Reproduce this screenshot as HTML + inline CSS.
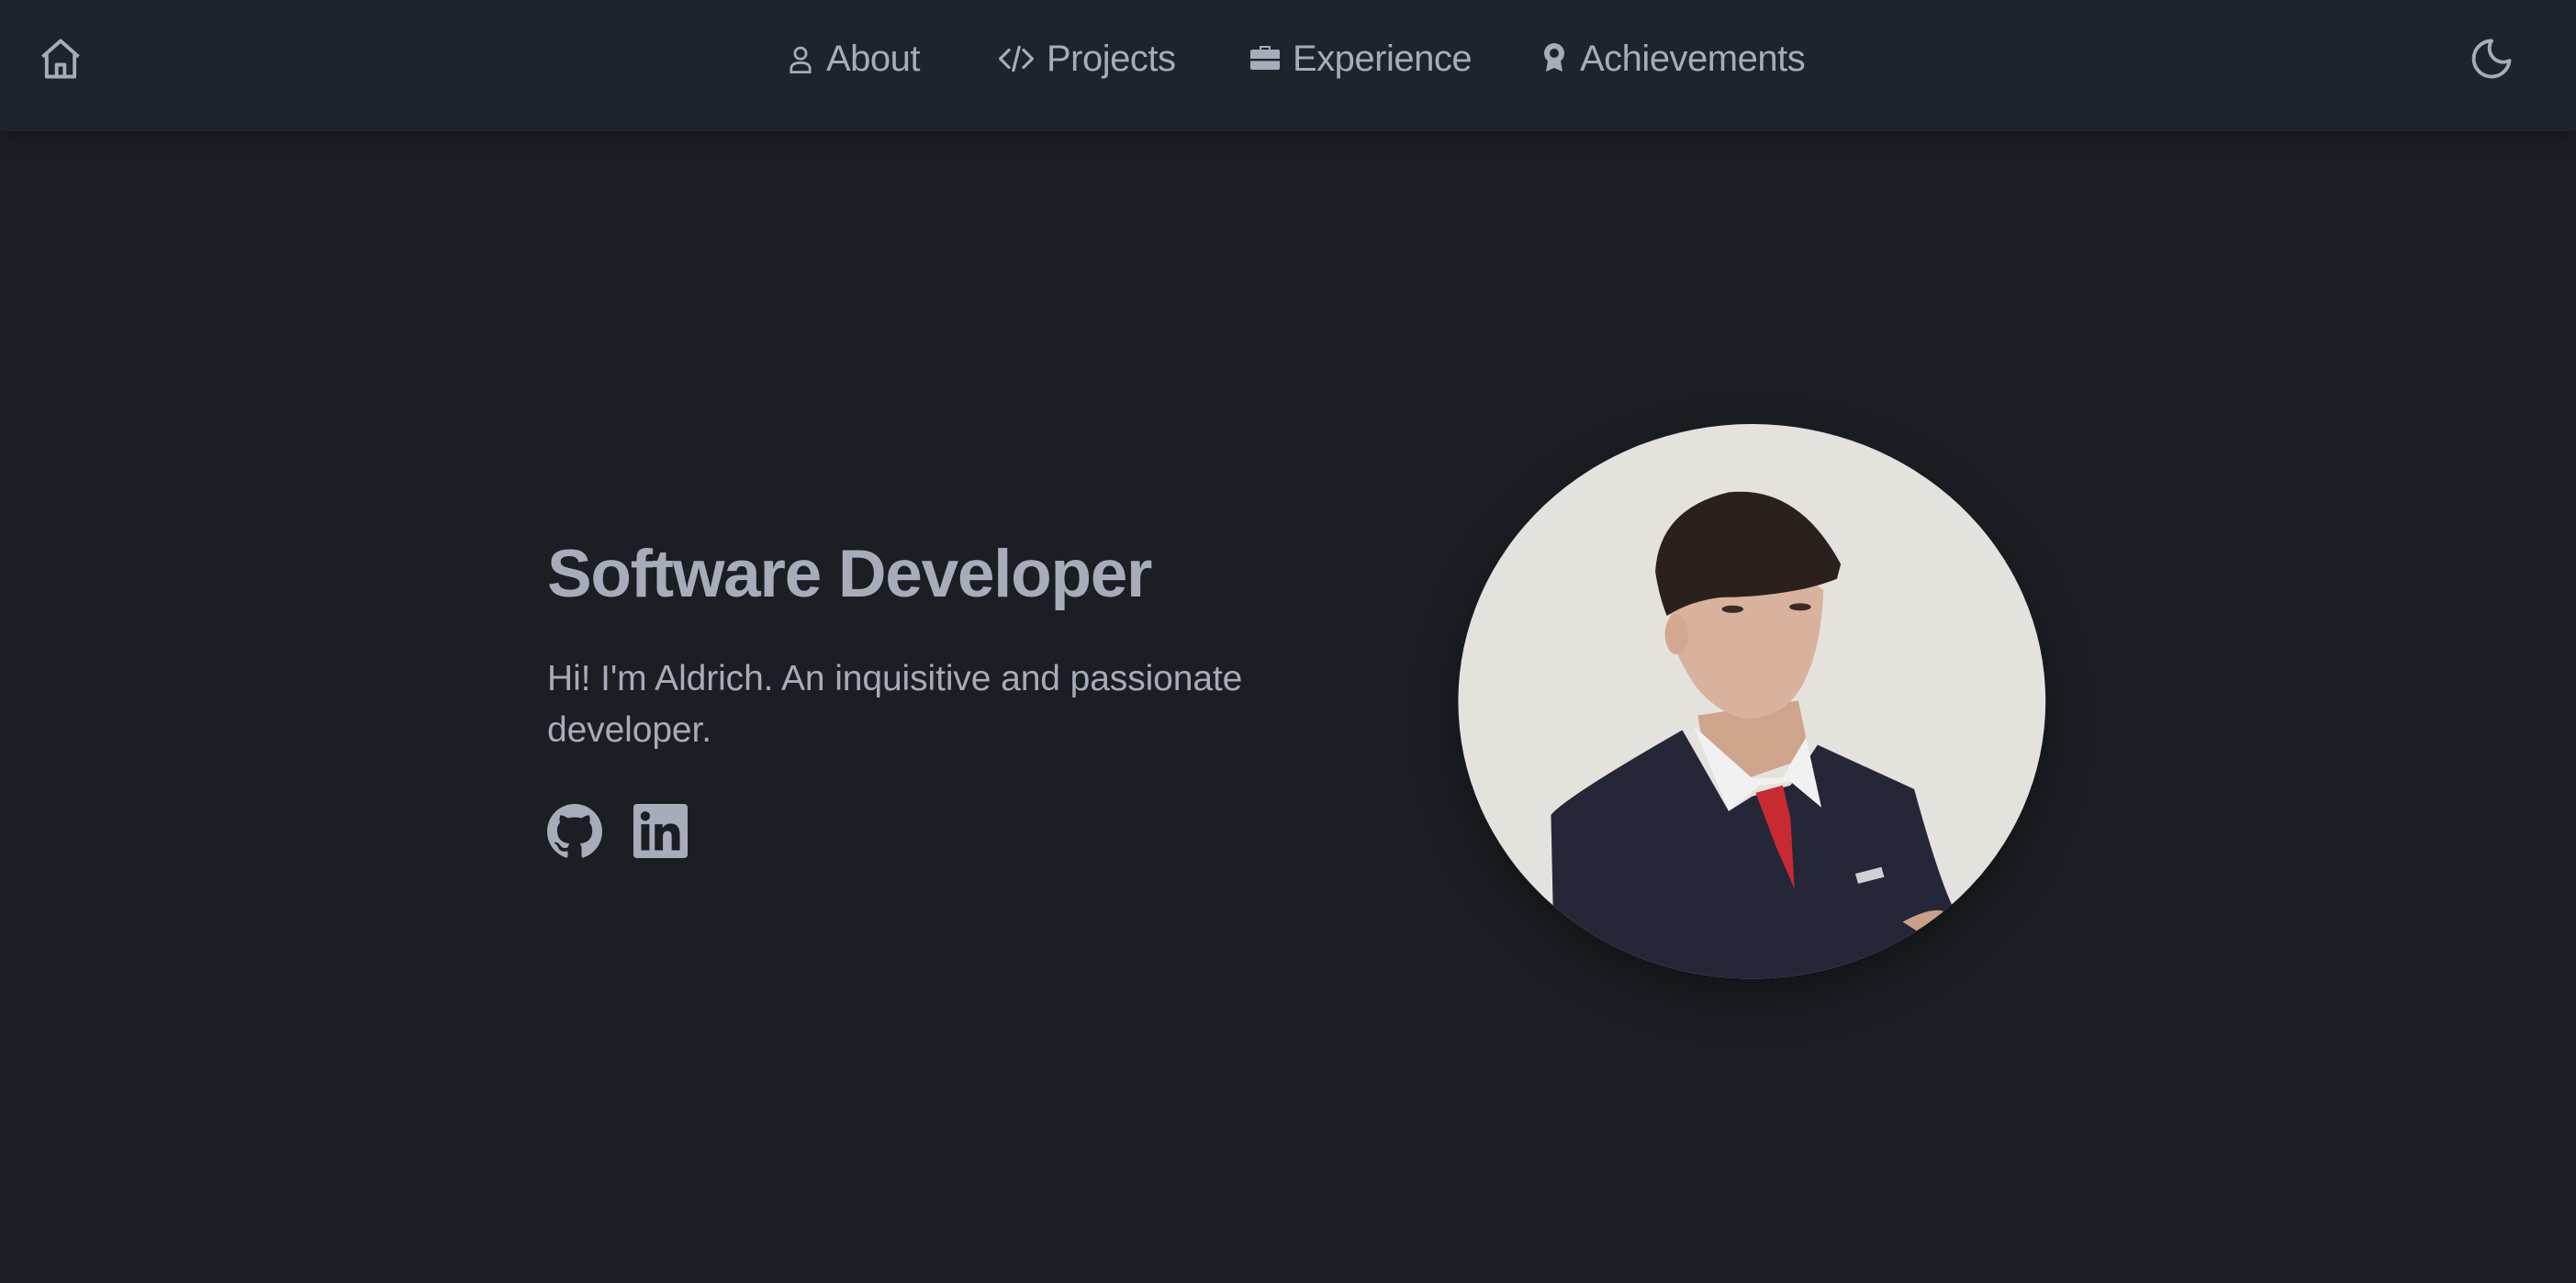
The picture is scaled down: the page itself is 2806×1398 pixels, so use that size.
<!DOCTYPE html>
<html><head><meta charset="utf-8"><style>
*{margin:0;padding:0;box-sizing:border-box}
body{width:2806px;height:1398px;background:#1b1e23;font-family:"Liberation Sans",sans-serif;overflow:hidden;position:relative}
.nav{position:absolute;left:0;top:0;width:2806px;height:143px;background:#1f232b;box-shadow:0 6px 20px rgba(0,0,0,.25)}
.nav .it{position:absolute;top:36px;height:56px;line-height:56px;color:#a6acb9;font-size:40px;letter-spacing:-0.5px}
.nav svg{position:absolute}
h1{position:absolute;left:596px;top:584px;font-size:73px;font-weight:bold;color:#a6acb9;letter-spacing:-1.3px;white-space:nowrap}
p{position:absolute;left:596px;top:712px;width:820px;font-size:39px;line-height:56px;color:#a6acb9;letter-spacing:-0.1px}
</style></head><body>
<div class="nav">
<svg style="left:40px;top:38px" width="52" height="52" viewBox="0 0 24 24" fill="none" stroke="#a6acb9" stroke-width="1.8" stroke-linejoin="round"><path d="M3 11 L12 3 L21 11 M5 9.5 V21 H19 V9.5 M10 21 V15 H14 V21"/></svg>
<svg style="left:858px;top:48px" width="28" height="34" viewBox="0 0 16 20" fill="none" stroke="#a6acb9" stroke-width="1.6"><circle cx="8" cy="6" r="3.6"/><path d="M2 18 V16 Q2 12 8 12 Q14 12 14 16 V18 Z"/></svg>
<div class="it" style="left:900px">About</div>
<svg style="left:1088px;top:48px" width="38" height="32" viewBox="0 0 24 20" fill="none" stroke="#a6acb9" stroke-width="2" stroke-linecap="round" stroke-linejoin="round"><path d="M7 4 L1 10 L7 16 M17 4 L23 10 L17 16 M14 2 L10 18"/></svg>
<div class="it" style="left:1140px">Projects</div>
<svg style="left:1362px;top:48px" width="32" height="30" viewBox="0 0 16 15"><path fill="#a6acb9" d="M5 1 H11 V3 H15 Q16 3 16 4 V13 Q16 14 15 14 H1 Q0 14 0 13 V4 Q0 3 1 3 H5 Z M6 2 V3 H10 V2 Z"/><rect x="0" y="8" width="16" height="1.2" fill="#1f232b"/></svg>
<div class="it" style="left:1408px">Experience</div>
<svg style="left:1680px;top:46px" width="26" height="34" viewBox="0 0 13 17"><circle cx="6.5" cy="6" r="5.5" fill="#a6acb9"/><circle cx="6.5" cy="6" r="2.5" fill="#1f232b"/><path d="M3 10 L2 16 L6.5 14 L11 16 L10 10 Z" fill="#a6acb9"/></svg>
<div class="it" style="left:1721px">Achievements</div>
<svg style="left:2688px;top:38px" width="52" height="52" viewBox="0 0 24 24" fill="none" stroke="#a6acb9" stroke-width="1.8" stroke-linejoin="round"><path d="M12 3 A9 9 0 1 0 21 13 A7 7 0 0 1 12 3 Z"/></svg>
</div>
<h1>Software Developer</h1>
<p>Hi! I'm Aldrich. An inquisitive and passionate developer.</p>
<svg style="position:absolute;left:596px;top:876px" width="60" height="60" viewBox="0 0 16 16"><path fill="#a6acb9" d="M8 0C3.58 0 0 3.58 0 8c0 3.540 2.290 6.530 5.470 7.590.4.07.55-.17.55-.38 0-.19-.01-.82-.01-1.490-2.010.37-2.530-.49-2.690-.94-.09-.23-.48-.94-.82-1.130-.28-.15-.68-.52-.01-.53.63-.01 1.080.58 1.230.82.72 1.210 1.870.87 2.330.66.07-.52.28-.87.51-1.070-1.780-.2-3.640-.89-3.640-3.950 0-.87.31-1.590.82-2.150-.08-.2-.36-1.020.08-2.120 0 0 .67-.21 2.200.82.64-.18 1.320-.27 2-.27.68 0 1.360.09 2 .27 1.530-1.040 2.200-.82 2.200-.82.44 1.100.16 1.920.08 2.120.51.56.82 1.270.82 2.150 0 3.070-1.870 3.750-3.650 3.950.29.25.54.73.54 1.480 0 1.070-.01 1.930-.01 2.200 0 .21.15.46.55.38A8.013 8.013 0 0016 8c0-4.420-3.580-8-8-8z"/></svg>
<svg style="position:absolute;left:690px;top:876px" width="59" height="59" viewBox="0 0 16 16"><rect width="16" height="16" rx="1" fill="#a6acb9"/><rect x="2.3" y="6" width="2.4" height="7.7" fill="#1b1e23"/><circle cx="3.5" cy="3.6" r="1.4" fill="#1b1e23"/><path fill="#1b1e23" d="M6.3 6 H8.6 V7.1 Q9.4 5.8 11 5.8 Q13.7 5.8 13.7 9.2 V13.7 H11.3 V9.6 Q11.3 8 10.1 8 Q8.7 8 8.7 9.7 V13.7 H6.3 Z"/></svg>
<div style="position:absolute;left:1588px;top:462px;width:640px;height:605px;border-radius:50%;box-shadow:0 20px 50px rgba(0,0,0,.35)"></div>
<svg style="position:absolute;left:1580px;top:450px" width="660" height="630" viewBox="0 0 1568 1568" preserveAspectRatio="none">
<defs><clipPath id="c"><ellipse cx="780" cy="782" rx="760" ry="752"/></clipPath></defs>
<g clip-path="url(#c)">
<rect width="1568" height="1568" fill="#e4e2dc"/>
<path d="M640 820 L650 880 L770 990 L880 950 L920 880 L900 780 Z" fill="#cfa48c"/>
<path d="M570 480 Q560 620 610 700 Q660 800 760 830 Q860 830 910 740 Q960 640 965 480 Q900 420 760 420 Q640 430 570 480 Z" fill="#d8b29c"/>
<ellipse cx="585" cy="600" rx="30" ry="55" fill="#d2a890"/>
<path d="M530 430 Q540 260 720 215 Q900 195 1010 410 L1000 450 Q950 470 900 480 Q800 500 700 500 Q620 510 560 550 Q540 500 530 430 Z" fill="#2a211f"/>
<ellipse cx="730" cy="532" rx="28" ry="10" fill="#3a2a24"/>
<ellipse cx="905" cy="526" rx="28" ry="10" fill="#3a2a24"/>
<path d="M260 1090 Q300 1040 600 860 L720 1080 L780 1040 L880 1010 L950 900 L1200 1020 Q1260 1250 1300 1340 L1300 1568 L270 1568 Z" fill="#252738"/>
<path d="M630 850 L720 1080 L800 1010 L880 1000 L960 1070 L920 880 L860 990 L780 990 Z" fill="#f2f1f2"/>
<path d="M790 1030 L860 1010 L880 1100 L890 1290 L840 1170 Z" fill="#c72a30"/>
<path d="M1170 1380 Q1260 1330 1290 1360 L1230 1420 Z" fill="#caa08a"/>
<rect x="1050" y="1240" width="70" height="28" fill="#cfd0d4" transform="rotate(-15 1085 1254)"/>
</g></svg>
</body></html>
